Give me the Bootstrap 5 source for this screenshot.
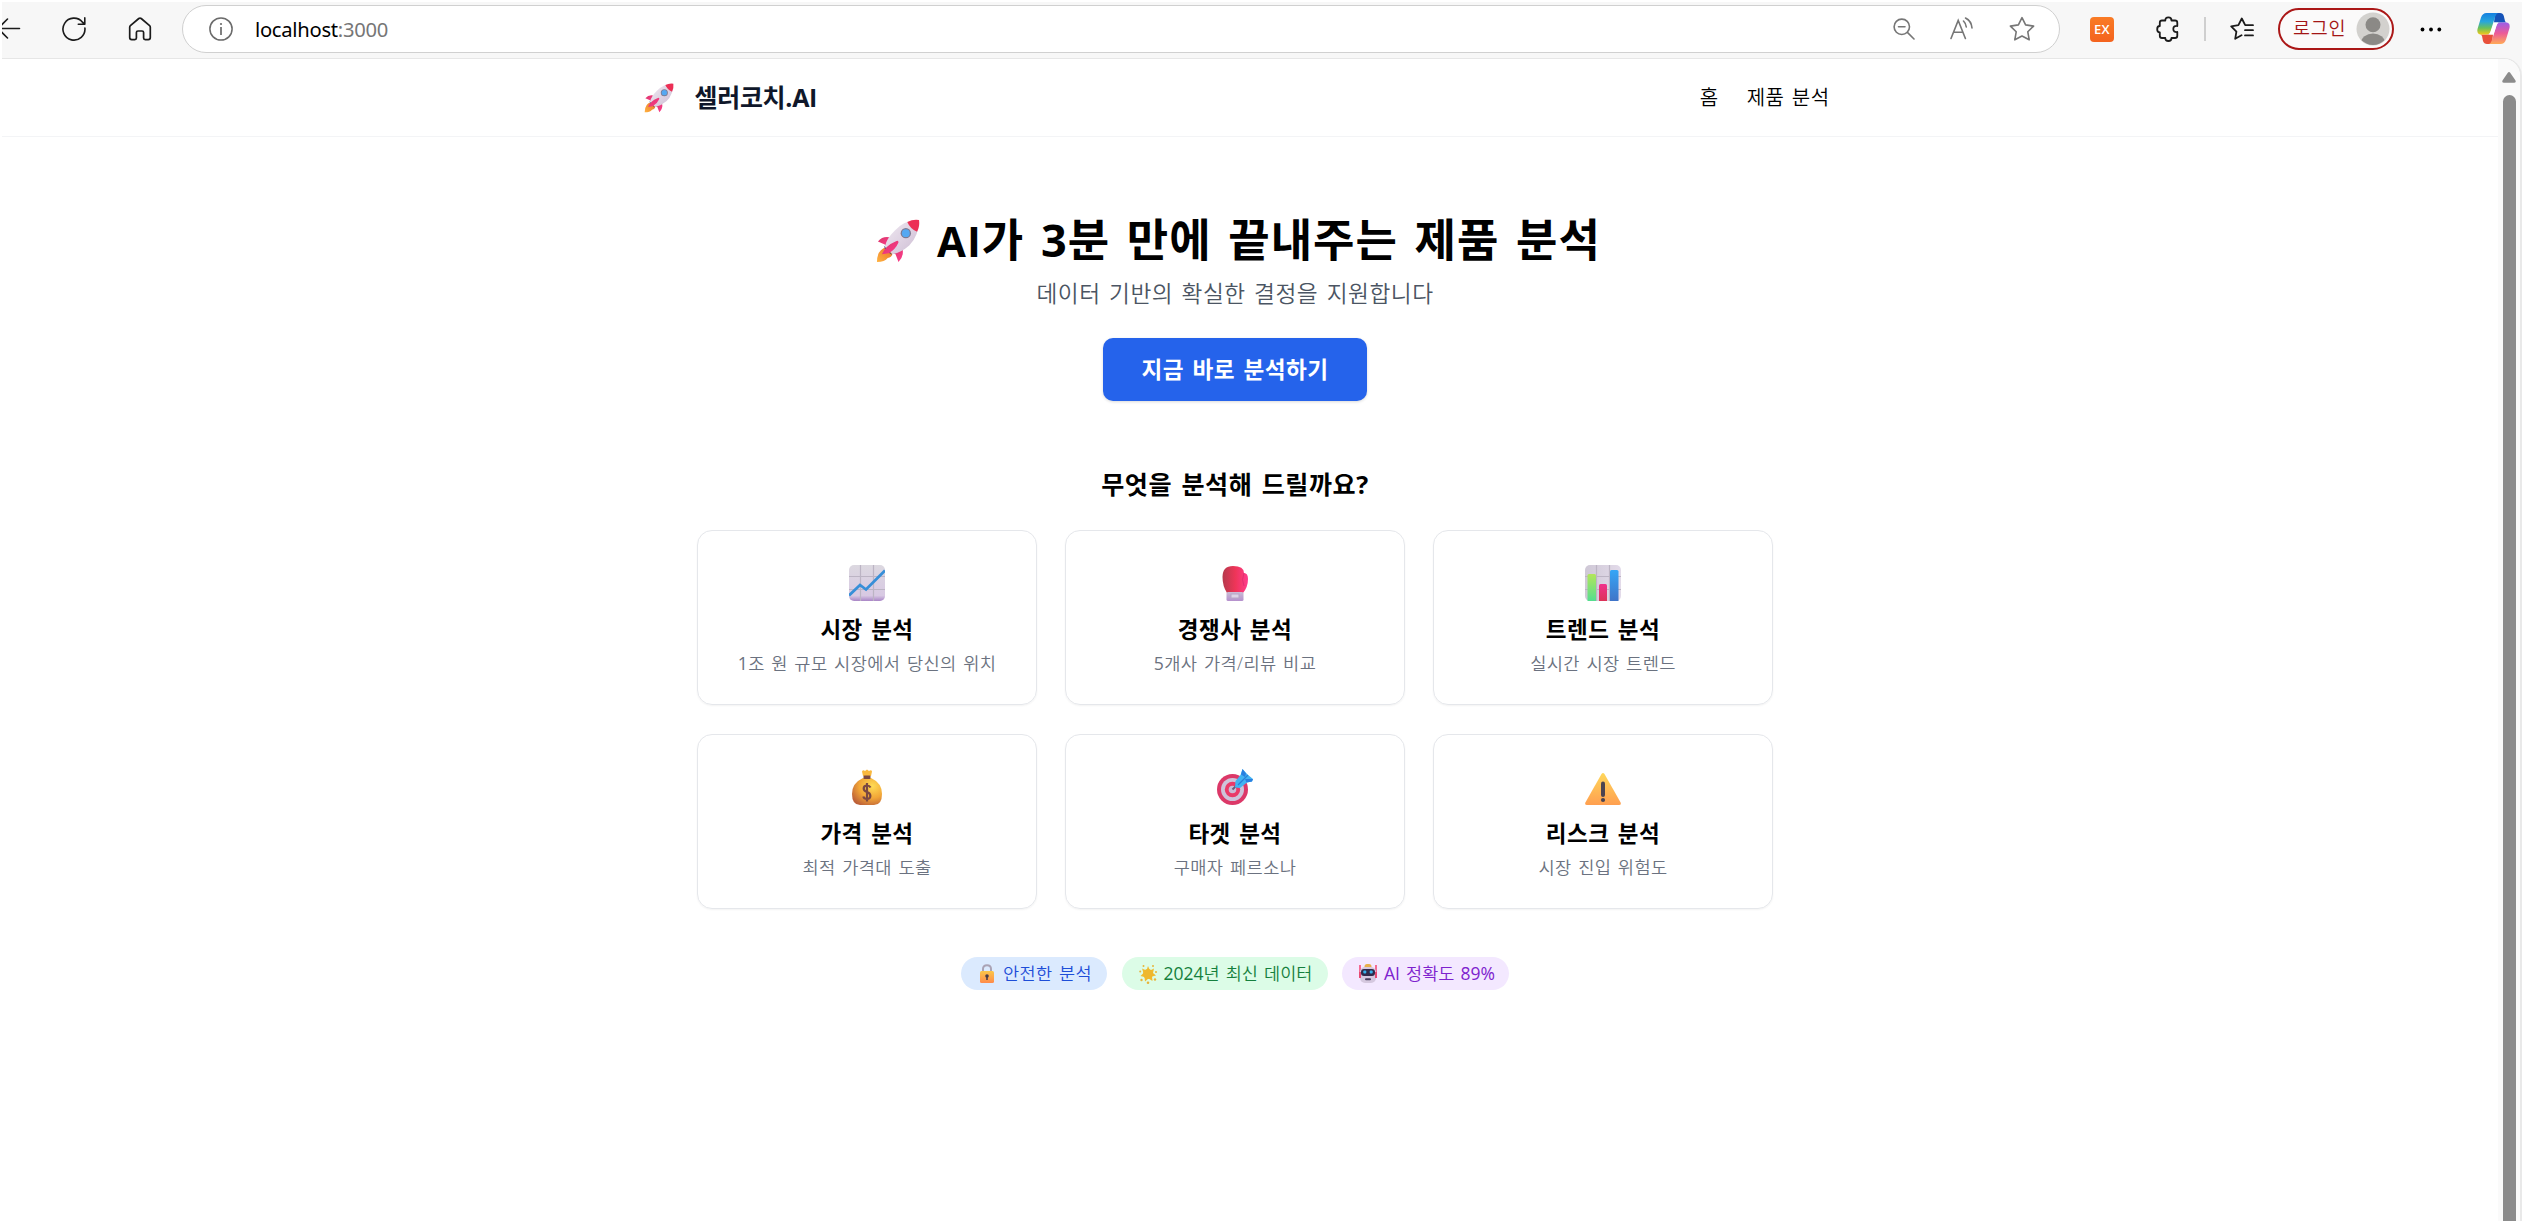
<!DOCTYPE html>
<html lang="ko">
<head>
<meta charset="utf-8">
<title>셀러코치.AI</title>
<link href="https://cdn.jsdelivr.net/npm/bootstrap@5.3.0/dist/css/bootstrap.min.css" rel="stylesheet">
<style>
body{font-family:"Open Sans","Noto Sans CJK KR",sans-serif;background:#fff;color:#000;width:2524px;height:1223px;overflow:hidden;padding:2px 2px 2px 2px}
h1,h2,h3,p,a,.cta,.pill{letter-spacing:.022em;word-spacing:.09em}
svg{display:block;flex:none}
.shell{background:#f7f7f7;height:1219px}
.toolbar{height:56px;flex:none;padding-bottom:2px}
.toolbar .i40{margin-left:40px}
.toolbar .i42{margin-left:42px}
.omnibox{width:1878px;height:48px;margin:0 30px;border:1.5px solid #d0d0d0;border-radius:24px;padding:0 24px 0 26px}
.url{font:20.2px/26px "Noto Sans",sans-serif;letter-spacing:-.28px;margin:0 0 1px 22px;color:#000}
.url span{color:#767676}
.omni-tools{gap:35px}
.ext-badge{width:24px;height:25px;border-radius:4px;background:linear-gradient(#f97b25,#f4631e);color:#fff;font:600 13px/25px "Open Sans",sans-serif;letter-spacing:.3px}
.sep{width:2px;height:24px;background:#cfcfcf;margin:0 24px}
.login{width:116px;height:42px;border:2px solid #ab1717;border-radius:21px;margin:0 26px 0 24px;padding:0 2px 0 13px;font-size:18.5px;letter-spacing:.04em;color:#a31515;background:#fbfafa;font-weight:350}
.login span{margin-top:-2px}
.copilot{margin-left:35px}
.viewport{border-top:1px solid #e6e6e6;border-right:2px solid #e9e9e9;border-top-right-radius:18px;background:#fff;overflow:hidden}
.page-col{width:2496px;flex:none}
.site-nav{height:78px;border-bottom:1px solid #f3f4f6;padding:0 27px 0 0}
.nav-inner{width:1186px}
.nav-links{gap:28px}
.brand-name{font-size:25px;font-weight:700;line-height:36px;color:#0f172a;margin:0 0 1px 21px;letter-spacing:-.3px}
.nav-inner a{font-size:20px;line-height:30px;color:#000;text-decoration:none;font-weight:350}
.page-main{padding:75px 30px 0 0;}
h1{font-size:45px;font-weight:700;line-height:56px;height:56px;margin:0 -6px 0 0}
h1 svg{margin:2px 16px 0 0}
.latin{font-size:.93em;line-height:1}
.sub{font-size:22.7px;line-height:35px;color:#4b5563;margin:8px 0 27px;font-weight:350}
.cta{width:264px;height:63px;border:0;border-radius:10px;background:#2563eb;color:#fff;font-size:22.6px;font-weight:600;box-shadow:0 1px 3px rgba(0,0,0,.15)}
h2{font-size:25.1px;font-weight:700;line-height:35px;margin:66px 0 28px}
.tiles{display:grid;grid-template-columns:repeat(3,340px);gap:29px 28px}
.tile{height:175px;border:1.5px solid #e5e7eb;border-radius:15px;padding-top:34px;box-shadow:0 1px 2px rgba(0,0,0,.05)}
.tile h3{font-size:22.5px;font-weight:600;line-height:35px;margin:11px 0 4px}
.tile p{font-size:17.6px;line-height:25px;color:#6b7280;margin:0;font-weight:350}
.num{font-weight:400}
.pills{margin-top:48px;gap:14.5px}
.pill{height:33px;border-radius:17px;font-size:17.5px;line-height:33px;padding:0 14px 0 17px;white-space:nowrap;font-weight:350}
.pill svg{margin-right:7px}
.pill-b{width:146px;background:#dbeafe;color:#1d4ed8}
.pill-g{width:206px;background:#dcfce7;color:#15803d;letter-spacing:0}
.pill-p{width:167px;background:#f3e8ff;color:#7e22ce;letter-spacing:0}
.track{width:22px;flex:none;background:#fafafa;padding-top:13px}
.thumb{width:13px;border-radius:7px 7px 0 0;background:#8b8b8b;margin-top:12px}
</style>
<script src="https://cdn.jsdelivr.net/npm/bootstrap@5.3.0/dist/js/bootstrap.bundle.min.js"></script>
</head>
<body>
<svg width="0" height="0" class="position-absolute" aria-hidden="true">
<defs>
<linearGradient id="gBody" x1="0" y1="0" x2="1" y2="1"><stop offset="0" stop-color="#f1ebf3"/><stop offset="1" stop-color="#cdbcd3"/></linearGradient>
<linearGradient id="gFin" x1="0" y1="0" x2="1" y2="1"><stop offset="0" stop-color="#d9386b"/><stop offset="1" stop-color="#ff3a8c"/></linearGradient>
<linearGradient id="gFire" x1="1" y1="0" x2="0" y2="1"><stop offset="0" stop-color="#e8702a"/><stop offset="1" stop-color="#ffb340"/></linearGradient>
<linearGradient id="gPaper" x1="0" y1="0" x2="0" y2="1"><stop offset="0" stop-color="#dcd8e0"/><stop offset=".85" stop-color="#d8c9e3"/><stop offset="1" stop-color="#a985c6"/></linearGradient>
<linearGradient id="gPaper2" x1="0" y1="0" x2="1" y2="0"><stop offset="0" stop-color="#cfc8d6"/><stop offset="1" stop-color="#e3dbea"/></linearGradient>
<linearGradient id="gGlove" x1="0" y1="0" x2="1" y2="0"><stop offset="0" stop-color="#b53a4c"/><stop offset=".5" stop-color="#ee3558"/><stop offset="1" stop-color="#ff3c8d"/></linearGradient>
<linearGradient id="gCuff" x1="0" y1="0" x2="0" y2="1"><stop offset="0" stop-color="#c9bdd4"/><stop offset="1" stop-color="#b590cd"/></linearGradient>
<linearGradient id="gGreen" x1="0" y1="0" x2="0" y2="1"><stop offset="0" stop-color="#b2e65a"/><stop offset="1" stop-color="#55dd90"/></linearGradient>
<linearGradient id="gPink" x1="0" y1="0" x2="0" y2="1"><stop offset="0" stop-color="#f0318c"/><stop offset="1" stop-color="#dc3358"/></linearGradient>
<linearGradient id="gBlue" x1="0" y1="0" x2="0" y2="1"><stop offset="0" stop-color="#35a6f6"/><stop offset="1" stop-color="#3f74c8"/></linearGradient>
<radialGradient id="gBag" cx=".68" cy=".3" r=".8"><stop offset="0" stop-color="#ffdc55"/><stop offset=".55" stop-color="#f2a637"/><stop offset="1" stop-color="#bd6139"/></radialGradient>
<linearGradient id="gWarn" x1="0" y1="0" x2="0" y2="1"><stop offset="0" stop-color="#ffd75a"/><stop offset="1" stop-color="#ff9f50"/></linearGradient>
<linearGradient id="gLock" x1="0" y1="0" x2="0" y2="1"><stop offset="0" stop-color="#fbc648"/><stop offset="1" stop-color="#ff8b4b"/></linearGradient>
<linearGradient id="cpA" x1="0" y1="0" x2="0" y2="1"><stop offset="0" stop-color="#1680e0"/><stop offset=".4" stop-color="#27a6dc"/><stop offset=".7" stop-color="#6ac15a"/><stop offset="1" stop-color="#f2c819"/></linearGradient>
<linearGradient id="cpB" x1="0" y1="0" x2="0" y2="1"><stop offset="0" stop-color="#9c5ee8"/><stop offset=".5" stop-color="#ec5a98"/><stop offset="1" stop-color="#ffab57"/></linearGradient>
<symbol id="rocket" viewBox="0 0 45 45">
<path d="M11 29Q1 31 1 44Q9 44 12 40Q17 39 17 34Z" fill="url(#gFire)"/>
<path d="M15 19Q7 17 2 23L9 26L11 29Z" fill="url(#gFin)"/>
<path d="M27 30Q29 38 23 44L20 36L15 34Z" fill="url(#gFin)"/>
<path d="M9 30L14 35L17 37L8 27Z" fill="#36427c"/>
<path d="M44 1Q29 1 19 12Q11 20 9 28L17 36Q26 34 34 27Q44 17 44 1Z" fill="url(#gBody)"/>
<path d="M44 1Q38 0 32 3Q35 10 42 13Q45 7 44 1Z" fill="#ec2f55"/>
<path d="M20 23Q10 27 6 36L13 35Q20 31 23 24Q23 21 20 23Z" fill="url(#gFin)"/>
<circle cx="30.5" cy="14.5" r="5.3" fill="#7d7a92"/><circle cx="30.5" cy="14.5" r="4" fill="#55a8f2"/>
</symbol>
<symbol id="robot" viewBox="0 0 18 20"><path d="M1 1V9M17 1V9" stroke="#f44b78" stroke-width="1.6"/><rect x="5.5" y="0" width="7" height="5" rx="2.5" fill="#e7b04c"/><rect x="1" y="3" width="16" height="16" rx="5" fill="#d5c8df"/><rect x="0" y="8" width="2" height="6" fill="#e74a73"/><rect x="16" y="8" width="2" height="6" fill="#e74a73"/><rect x="2" y="5" width="14" height="7" rx="3" fill="#322a4a"/><rect x="4.3" y="6.5" width="3" height="3" rx="1" fill="#39b2eb"/><rect x="10.7" y="6.5" width="3" height="3" rx="1" fill="#39b2eb"/><rect x="6" y="14.3" width="6" height="2" rx="1" fill="#4a3c5c"/></symbol>
</defs></svg>

<div class="shell d-flex flex-column">
<header class="toolbar d-flex align-items-center">
<svg width="20" height="24" viewBox="0 0 20 24" fill="none" stroke="#1b1b1b" stroke-width="1.6" stroke-linecap="round"><path d="M17.500 11.5H0M5.500 2L-4 11.5L5.500 21"/></svg>
<svg class="i40" width="24" height="24" viewBox="0 0 24 24" fill="none" stroke="#1b1b1b" stroke-width="1.6" stroke-linecap="round" stroke-linejoin="round"><path d="M22.900 11A11 11 0 1 1 20.500 5.200L22.600 7.200M22.800 .9V7.200H16.300"/></svg>
<svg class="i42" width="24" height="24" viewBox="0 0 24 24" fill="none" stroke="#1b1b1b" stroke-width="1.7" stroke-linejoin="round"><path d="M1.7 10.2Q1.7 9.3 2.4 8.7L10.8 1.5Q12 .6 13.2 1.5L21.6 8.7Q22.3 9.3 22.3 10.2V20.6Q22.3 22.6 20.3 22.6H17.2Q15.6 22.6 15.6 21V15.6Q15.6 14 14 14H10Q8.4 14 8.4 15.6V21Q8.4 22.6 6.8 22.6H3.7Q1.7 22.6 1.7 20.6Z"/></svg>
<div class="omnibox bg-white d-flex align-items-center">
<svg width="24" height="24" viewBox="0 0 24 24" fill="none" stroke="#6b6b6b" stroke-width="1.5"><circle cx="12" cy="12" r="11.1"/><path d="M12 10V18" stroke-width="1.7"/><circle cx="12" cy="7" r="1.1" fill="#6b6b6b" stroke="none"/></svg>
<div class="url">localhost<span>:3000</span></div>
<div class="omni-tools ms-auto d-flex align-items-center">
<svg width="22" height="22" viewBox="0 0 22 22" fill="none" stroke="#767676" stroke-width="1.6" stroke-linecap="round"><circle cx="8.800" cy="8.800" r="7.700"/><path d="M5.500 8.800H12M14.400 14.400L21 21"/></svg>
<svg width="24" height="24" viewBox="0 0 24 24" fill="none" stroke="#767676" stroke-width="1.6" stroke-linecap="round"><path d="M1 21.500L8.200 3.500L15.400 21.500M3.600 15.300H12.800M13.500 4Q16 6.500 16.300 10M15.500 1Q21.500 4 22 11"/></svg>
<svg width="26" height="26" viewBox="0 0 26 26" fill="none" stroke="#767676" stroke-width="1.6" stroke-linejoin="round"><path d="M13 1.600L16.600 8.900L24.600 10.100L18.800 15.800L20.200 23.800L13 20L5.800 23.800L7.200 15.800L1.400 10.100L9.400 8.900Z"/></svg>
</div>
</div>
<div class="ext-badge text-center">EX</div>
<svg class="i42" width="24" height="26" viewBox="0 0 24 26" fill="none" stroke="#1b1b1b" stroke-width="1.8" stroke-linejoin="round"><path d="M6 4.500H9.300Q9.300 1.300 12.400 1.300T15.500 4.500H19Q21.300 4.500 21.300 6.800V10Q17.300 9.600 17.300 13T21.300 16V19.700Q21.300 22 19 22H15.500Q15.500 25 12.400 25T9.300 22H6Q3.800 22 3.800 19.700V16.500Q1.200 16.300 1.200 13.200T3.800 10V6.800Q3.800 4.500 6 4.500Z"/></svg>
<div class="sep"></div>
<svg width="24" height="24" viewBox="0 0 24 24" fill="none" stroke="#1b1b1b" stroke-width="1.8" stroke-linejoin="round" stroke-linecap="round"><path d="M5.200 21.800L6.400 14.700L1.200 9.300L8.400 8.200L11.800 1.500L15.200 8.200H23M15 13.200H23M15 18.400H23M5.200 21.800L11.500 18.300"/></svg>
<div class="login d-flex align-items-center justify-content-between"><span>로그인</span>
<svg width="34" height="34" viewBox="0 0 34 34"><defs><clipPath id="av"><circle cx="17" cy="17" r="16"/></clipPath></defs><circle cx="17" cy="17" r="16.5" fill="#d3d1ce"/><g clip-path="url(#av)" fill="#8b8986"><circle cx="17" cy="12.800" r="7.500"/><ellipse cx="17" cy="31" rx="12" ry="9.500"/></g></svg></div>
<svg width="22" height="6" viewBox="0 0 22 6"><circle cx="2.500" cy="3.500" r="1.900"/><circle cx="11" cy="3.500" r="1.900"/><circle cx="19.300" cy="3.500" r="1.900"/></svg>
<svg class="copilot" width="33" height="32" viewBox="0 0 33 32">
<path d="M18 0H23Q26 0 26.800 3L28 8Q28.600 9.500 30 9.500H17Z" fill="#1653b8"/>
<path d="M15 31H10Q7 31 6 28L5 23Q4.500 21.500 3 21.500H16Z" fill="#e8503a"/>
<path d="M9.500 0H21Q19 1 18 4L13.500 18.500Q12.500 21.500 9.500 21.500H4Q-.5 21.500 .5 16L4 4.500Q5.500 0 9.500 0Z" fill="url(#cpA)"/>
<path d="M23.500 31H12Q14 30 15 27L19.500 12.500Q20.500 9.500 23.500 9.500H29Q33.500 9.500 32.500 15L29 26.500Q27.500 31 23.500 31Z" fill="url(#cpB)"/>
<path d="M17 9.500H21.500Q20 10 19.500 12.500L16.500 21.500H11.500Q13 21 13.700 18.500Z" fill="#fff"/>
</svg>
</header>

<div class="viewport d-flex flex-grow-1">
<div class="page-col">
<nav class="site-nav d-flex justify-content-center align-items-center">
<div class="nav-inner d-flex align-items-center">
<svg width="30" height="30"><use href="#rocket"/></svg>
<span class="brand-name">셀러코치.AI</span>
<div class="nav-links ms-auto d-flex"><a href="#">홈</a><a href="#">제품 분석</a></div>
</div>
</nav>
<main class="page-main d-flex flex-column align-items-center">
<h1 class="d-flex align-items-center"><svg width="46" height="44"><use href="#rocket"/></svg><span><span class="latin">AI</span>가 3분 만에 끝내주는 제품 분석</span></h1>
<p class="sub">데이터 기반의 확실한 결정을 지원합니다</p>
<button class="cta">지금 바로 분석하기</button>
<h2>무엇을 분석해 드릴까요?</h2>
<div class="tiles">
<div class="tile d-flex flex-column align-items-center">
<svg width="36" height="36" viewBox="0 0 36 36"><rect width="36" height="36" rx="5" fill="url(#gPaper)"/><path d="M11.5 0V36M24.5 0V36M0 11.5H36M0 24.5H36" stroke="#bcb4c4" stroke-width="1.2"/><path d="M0 30.5L11 20L17 24.5L36 5.5" fill="none" stroke="#378fd8" stroke-width="2.8"/></svg>
<h3>시장 분석</h3><p><span class="num">1</span>조 원 규모 시장에서 당신의 위치</p></div>
<div class="tile d-flex flex-column align-items-center">
<svg width="36" height="36" viewBox="0 0 36 36"><path d="M5.500 12Q5.500 1 16 1Q27 1 27 8Q31 8 31 14Q31 22 26 28H10Q5.500 21 5.500 12Z" fill="url(#gGlove)"/><path d="M27 8Q24 15 27 21" fill="none" stroke="#e02f70" stroke-width="1"/><rect x="9.500" y="27" width="17" height="9" rx="1.500" fill="url(#gCuff)"/><rect x="14" y="29" width="8" height="4" fill="#ddd3e6" stroke="#b6a5c5"/></svg>
<h3>경쟁사 분석</h3><p><span class="num">5</span>개사 가격/리뷰 비교</p></div>
<div class="tile d-flex flex-column align-items-center">
<svg width="36" height="36" viewBox="0 0 36 36"><rect width="36" height="36" rx="5" fill="url(#gPaper2)"/><path d="M11.5 0V36M24.5 0V36M0 11.5H36M0 24.5H36" stroke="#bcb4c4" stroke-width="1.2"/><path d="M2.5 36V10.5Q2.5 9 4 9H9.5Q11 9 11 10.5V36Z" fill="url(#gGreen)"/><path d="M14 36V20.5Q14 19 15.500 19H20.5Q22 19 22 20.500V36Z" fill="url(#gPink)"/><path d="M25 36V6.500Q25 5 26.500 5H32Q33.500 5 33.500 6.500V36Z" fill="url(#gBlue)"/></svg>
<h3>트렌드 분석</h3><p>실시간 시장 트렌드</p></div>
<div class="tile d-flex flex-column align-items-center">
<svg width="36" height="36" viewBox="0 0 36 36"><path d="M14 7L13 2.500Q14 .5 16 2L18 .5L20 2Q22.500 .5 23 2.500L22 7Z" fill="#f9b83e"/><path d="M14 9Q3 14 3 25Q3 36 11 36H25Q33 36 33 25Q33 14 22 9Z" fill="url(#gBag)"/><rect x="14.500" y="6.500" width="7" height="3.500" rx="1" fill="#7b4842"/><path d="M21.500 18.500Q20.500 16.500 18 16.500Q14.700 16.500 14.700 19.500Q14.700 22 18 23T21.400 27Q21.200 30 18 30Q15 30 14.300 27.500M18 14V32.500" fill="none" stroke="#7b4842" stroke-width="2.200"/></svg>
<h3>가격 분석</h3><p>최적 가격대 도출</p></div>
<div class="tile d-flex flex-column align-items-center">
<svg width="36" height="36" viewBox="0 0 36 36"><circle cx="15.500" cy="20.500" r="15.500" fill="#dc3868"/><circle cx="15.500" cy="20.500" r="11.500" fill="#cec3da"/><circle cx="15.500" cy="20.500" r="7.700" fill="#ea3a68"/><circle cx="15.500" cy="20.500" r="3.800" fill="#cbbbd5"/><path d="M15.500 20.500L20 16" stroke="#685b7d" stroke-width="2"/><path d="M18 18.500L18.500 12L23.500 6L25.500 0L30.500 5.500L36 10L35 12.500L30 13.500L23 19Z" fill="#42b3f2"/><path d="M24 5.500L25.500 0L29 4.500L28 8ZM36 10L35 12.500L29.500 13.500L28 10Z" fill="#2a80e0"/><path d="M21 16L31 6" stroke="#2a80d8" stroke-width="1.200"/></svg>
<h3>타겟 분석</h3><p>구매자 페르소나</p></div>
<div class="tile d-flex flex-column align-items-center">
<svg width="36" height="36" viewBox="0 0 36 36"><path d="M16.500 5Q18 3 19.500 5L35.600 33.500Q36.500 36 34 36H2Q-.5 36 .4 33.500Z" fill="url(#gWarn)"/><rect x="16" y="12.500" width="4" height="15.500" rx="2" fill="#4b4450"/><circle cx="18" cy="31" r="2.100" fill="#4b4450"/></svg>
<h3>리스크 분석</h3><p>시장 진입 위험도</p></div>
</div>
<div class="pills d-flex">
<div class="pill pill-b d-flex align-items-center"><svg width="18" height="20" viewBox="0 0 18 20"><path d="M5 9V5Q5 1.200 9 1.200T13 5V9" fill="none" stroke="#aaa3b5" stroke-width="2"/><rect x="2" y="7" width="14" height="12" rx="1.500" fill="url(#gLock)"/><circle cx="9" cy="12" r="1.800" fill="#4a3b46"/><path d="M9 12V16" stroke="#4a3b46" stroke-width="1.600"/></svg><span>안전한 분석</span></div>
<div class="pill pill-g d-flex align-items-center"><svg width="18" height="20" viewBox="0 0 18 20"><path d="M9 2L11 6.500L15 4.500L14 9L17 11.500L13 12.500L13.500 17L9.500 14.500L6 17.500L5.500 13L1.500 12L4.500 9L3 4.500L7.500 6.500Z" fill="#f2bb2d"/><circle cx="9" cy="10" r="5" fill="#eeb82f"/><g fill="#e7b53a"><circle cx="4.500" cy="2" r="1"/><circle cx="14" cy="2" r="1"/><circle cx="1.200" cy="7.500" r="1"/><circle cx="17" cy="8" r="1"/><circle cx="2.500" cy="16" r="1.200"/><circle cx="16" cy="15.500" r="1.200"/><circle cx="9" cy="18.700" r="1.300"/></g></svg><span><span class="num">2024</span>년 최신 데이터</span></div>
<div class="pill pill-p d-flex align-items-center"><svg width="18" height="20"><use href="#robot"/></svg><span><span class="num">AI</span> 정확도 <span class="num">89%</span></span></div>
</div>
</main>
</div>
<div class="track d-flex flex-column align-items-center">
<svg width="14" height="11" viewBox="0 0 14 11"><path d="M5.600 1Q7 -.8 8.400 1L13.500 8.500Q14.300 10.700 12 10.700H2Q-.3 10.700 .5 8.500Z" fill="#8b8b8b"/></svg>
<div class="thumb flex-grow-1"></div>
</div>
</div>
</div>
</body>
</html>
